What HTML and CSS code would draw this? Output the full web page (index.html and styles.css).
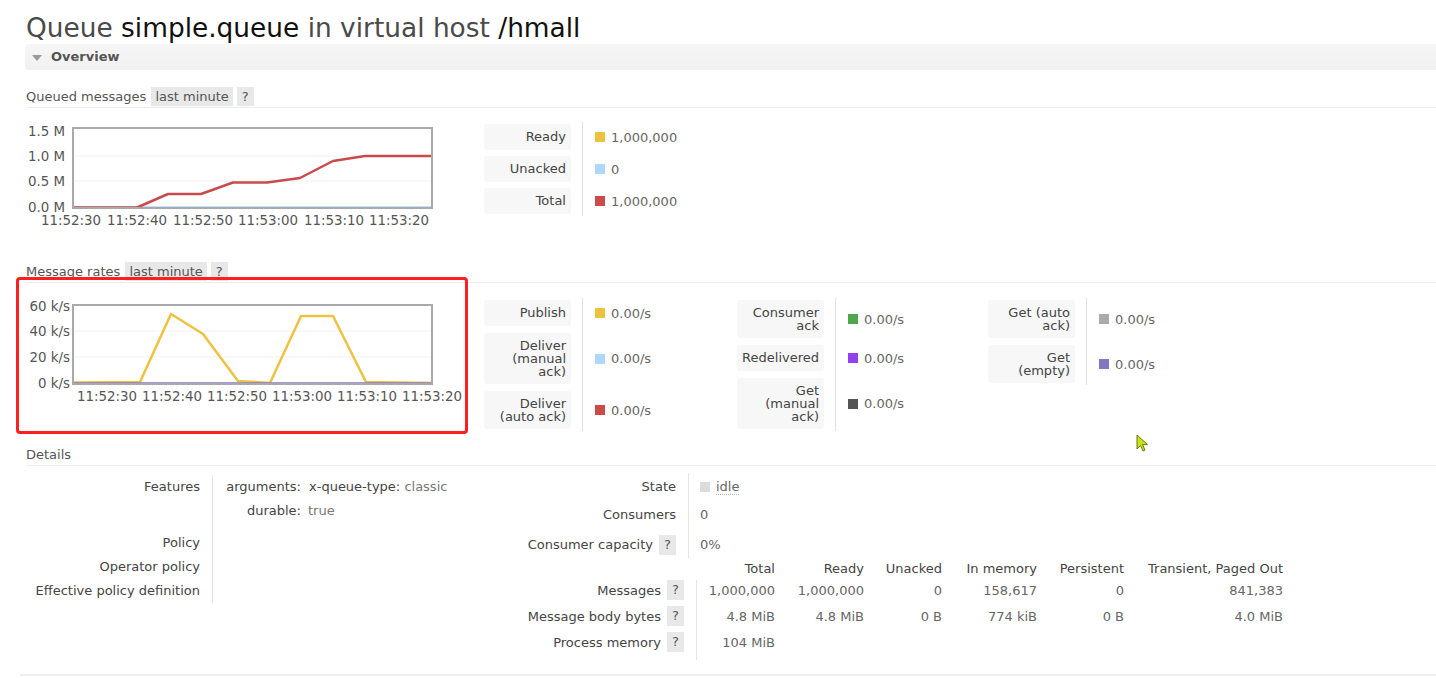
FILE: index.html
```html
<!DOCTYPE html>
<html>
<head>
<meta charset="utf-8">
<title>Queue simple.queue</title>
<link rel="stylesheet" href="styles.css">
</head>
<body>
<div class="page">
  <h1 class="title">Queue <b>simple.queue</b> in virtual host <b>/hmall</b></h1>

  <section class="panel">
    <div class="panel-head"><span class="tri"></span>Overview</div>

    <div class="subhead">Queued messages <span class="tag">last minute</span><span class="help">?</span></div>
    <div class="chart-row">
      <svg class="chart" width="444" height="115" viewBox="26 118 444 115">
        <line class="grid" x1="74" y1="156" x2="431" y2="156"/>
        <line class="grid" x1="74" y1="181" x2="431" y2="181"/>
        <line x1="74" y1="207.5" x2="431" y2="207.5" stroke="#afd8f8" stroke-width="2.5"/>
        <polyline fill="none" stroke="#c84a4c" stroke-width="2.5" stroke-linejoin="round"
          points="74,207.5 137,207.5 168,194 201,194 233,182.5 267,182.5 300,178 333,161 365,156 431,156"/>
        <rect x="73" y="128" width="359" height="80" fill="none" stroke="#a9a9ad" stroke-width="2"/>
        <g class="ylab">
          <text x="65" y="136">1.5 M</text>
          <text x="65" y="161">1.0 M</text>
          <text x="65" y="186">0.5 M</text>
          <text x="65" y="212">0.0 M</text>
        </g>
        <g class="xlab">
          <text x="71" y="225">11:52:30</text>
          <text x="137" y="225">11:52:40</text>
          <text x="203" y="225">11:52:50</text>
          <text x="268" y="225">11:53:00</text>
          <text x="334" y="225">11:53:10</text>
          <text x="399" y="225">11:53:20</text>
        </g>
      </svg>
      <div class="legend q-legend rows3">
        <div class="sep"></div>
        <div class="lab">Ready</div><div class="val"><i class="sw" style="background:#edc240"></i>1,000,000</div>
        <div class="lab">Unacked</div><div class="val"><i class="sw" style="background:#afd8f8"></i>0</div>
        <div class="lab">Total</div><div class="val"><i class="sw" style="background:#cb4b4b"></i>1,000,000</div>
      </div>
    </div>

    <div class="subhead sub-rates">Message rates <span class="tag">last minute</span><span class="help">?</span></div>
    <div class="chart-row rates-row">
      <svg class="chart" width="444" height="120" viewBox="26 290 444 120">
        <line class="grid" x1="74" y1="331" x2="431" y2="331"/>
        <line class="grid" x1="74" y1="357" x2="431" y2="357"/>
        <polyline fill="none" stroke="#edc240" stroke-width="2.5" stroke-linejoin="round"
          points="74,382.5 140,382 171,314 203,334 238,381 255,382 270,383 301,316 333,316 366,382 431,383"/>
        <line x1="74" y1="383.5" x2="431" y2="383.5" stroke="#8679c4" stroke-width="2.5"/>
        <rect x="73" y="305" width="359" height="79" fill="none" stroke="#a9a9ad" stroke-width="2"/>
        <g class="ylab">
          <text x="70" y="311">60 k/s</text>
          <text x="70" y="336">40 k/s</text>
          <text x="70" y="362">20 k/s</text>
          <text x="70" y="388">0 k/s</text>
        </g>
        <g class="xlab">
          <text x="107" y="401">11:52:30</text>
          <text x="172" y="401">11:52:40</text>
          <text x="237" y="401">11:52:50</text>
          <text x="302" y="401">11:53:00</text>
          <text x="367" y="401">11:53:10</text>
          <text x="432" y="401">11:53:20</text>
        </g>
      </svg>
      <div class="rates">
        <div class="legend r-legend rows3">
          <div class="sep"></div>
          <div class="lab">Publish</div><div class="val"><i class="sw" style="background:#edc240"></i>0.00/s</div>
          <div class="lab">Deliver<br>(manual<br>ack)</div><div class="val"><i class="sw" style="background:#afd8f8"></i>0.00/s</div>
          <div class="lab">Deliver<br>(auto ack)</div><div class="val"><i class="sw" style="background:#cb4b4b"></i>0.00/s</div>
        </div>
        <div class="legend r-legend rows3">
          <div class="sep"></div>
          <div class="lab">Consumer<br>ack</div><div class="val"><i class="sw" style="background:#4da74d"></i>0.00/s</div>
          <div class="lab">Redelivered</div><div class="val"><i class="sw" style="background:#9440ed"></i>0.00/s</div>
          <div class="lab">Get<br>(manual<br>ack)</div><div class="val"><i class="sw" style="background:#555555"></i>0.00/s</div>
        </div>
        <div class="legend r-legend rows2">
          <div class="sep"></div>
          <div class="lab">Get (auto<br>ack)</div><div class="val"><i class="sw" style="background:#aaaaaa"></i>0.00/s</div>
          <div class="lab">Get<br>(empty)</div><div class="val"><i class="sw" style="background:#7c79c0"></i>0.00/s</div>
        </div>
      </div>
    </div>

    <div class="subhead sub-details">Details</div>
    <div class="details">
      <div class="dleft">
        <div class="dlab feat">Features</div>
        <div class="dval feat">
          <div class="args">
            <span class="k">arguments:</span><span class="v"><span class="kk">x-queue-type:</span> <span class="g">classic</span></span>
            <span class="k">durable:</span><span class="v"><span class="g">true</span></span>
          </div>
        </div>
        <div class="dlab">Policy</div><div class="dval"></div>
        <div class="dlab">Operator policy</div><div class="dval"></div>
        <div class="dlab">Effective policy definition</div><div class="dval"></div>
      </div>
      <div class="dright">
        <div class="stable">
          <div class="slab">State</div><div class="sval"><i class="idle-sw"></i><span class="idle">idle</span></div>
          <div class="slab">Consumers</div><div class="sval">0</div>
          <div class="slab">Consumer capacity <span class="help">?</span></div><div class="sval">0%</div>
        </div>
        <div class="mtable">
          <div class="mh"></div>
          <div class="mh">Total</div><div class="mh">Ready</div><div class="mh">Unacked</div><div class="mh">In memory</div><div class="mh">Persistent</div><div class="mh">Transient, Paged Out</div>

          <div class="mlab">Messages <span class="help">?</span></div>
          <div class="mc first">1,000,000</div><div class="mc">1,000,000</div><div class="mc">0</div><div class="mc">158,617</div><div class="mc">0</div><div class="mc">841,383</div>

          <div class="mlab">Message body bytes <span class="help">?</span></div>
          <div class="mc first">4.8 MiB</div><div class="mc">4.8 MiB</div><div class="mc">0 B</div><div class="mc">774 kiB</div><div class="mc">0 B</div><div class="mc">4.0 MiB</div>

          <div class="mlab">Process memory <span class="help">?</span></div>
          <div class="mc first last">104 MiB</div><div class="mc"></div><div class="mc"></div><div class="mc"></div><div class="mc"></div><div class="mc"></div>
        </div>
      </div>
    </div>
  </section>

  <div class="redbox"></div>
  <svg class="cursor" width="14" height="20" viewBox="0 0 14 20">
    <path d="M1 1 L1 15 L4.5 11.5 L7 17 L9 16 L6.6 10.6 L11.5 10.6 Z" fill="#c8e21a" stroke="#6b7a10" stroke-width="1"/>
  </svg>
</div>
</body>
</html>
```

FILE: styles.css
```css
* { box-sizing: border-box; }
html, body { margin: 0; padding: 0; background: #fff; }
body {
  font-family: "DejaVu Sans", Verdana, sans-serif;
  font-size: 13px;
  color: #444;
  width: 1436px;
  height: 678px;
  overflow: hidden;
}
.page { position: relative; padding: 12px 0 0 26px; }

.title {
  margin: 0;
  font-size: 26.4px;
  line-height: 32px;
  font-weight: normal;
  color: #4a4a4a;
  white-space: nowrap;
}
.title b { font-weight: normal; color: #111; }

.panel { border-bottom: 2px solid #efefef; height: 632px; margin-left: -6px; padding-left: 6px; }

.panel-head {
  height: 26px;
  line-height: 26px;
  background: linear-gradient(#f6f6f6, #f1f1f1);
  border-radius: 3px 0 0 3px;
  font-weight: bold;
  color: #555;
  padding-left: 26px;
  position: relative;
  margin-left: -1px;
}
.tri {
  position: absolute;
  left: 7px; top: 11px;
  width: 0; height: 0;
  border-left: 5px solid transparent;
  border-right: 5px solid transparent;
  border-top: 6px solid #9a9a9a;
}

.subhead {
  margin-top: 17px;
  height: 21px;
  line-height: 20px;
  border-bottom: 1px solid #ededed;
  color: #555;
  white-space: nowrap;
}
.sub-rates { margin-top: 29px; }
.sub-details { margin-top: 16px; }

.tag, .help {
  display: inline-block;
  background: #e8e8e8;
  color: #555;
  height: 19px;
  line-height: 19px;
  padding: 0 4px;
  vertical-align: top;
}
.tag { margin-left: 1px; }
.help { margin-left: 4px; padding: 0 5px; }

.chart-row { display: flex; align-items: flex-start; margin-top: 10px; }
.rates-row { margin-top: 7px; }
.chart { display: block; flex: none; }
.chart text { font-family: "DejaVu Sans", Verdana, sans-serif; font-size: 13.4px; fill: #555; }
.chart .ylab text { text-anchor: end; }
.chart .xlab text { text-anchor: middle; }
.chart .grid { stroke: #f1f1f1; stroke-width: 1; }

.legend {
  display: grid;
  grid-template-columns: 87px 1px auto;
  column-gap: 11px;
  row-gap: 6px;
  align-items: center;
  margin-left: 14px;
}
.rows3 { grid-template-rows: auto auto auto; }
.rows2 { grid-template-rows: auto auto; }
.q-legend { margin-top: 6px; }
.legend .sep { grid-column: 2; grid-row: 1 / -1; align-self: stretch; background: #e2e2e2; margin: -2px 0; }
.legend .lab {
  grid-column: 1;
  background: #f7f7f7;
  border-radius: 3px;
  text-align: right;
  padding: 6px 5px 6px 4px;
  line-height: 13px;
  min-height: 26px;
  color: #444;
  white-space: nowrap;
}
.legend .val { grid-column: 3; display: flex; align-items: center; color: #666; padding-left: 1px; white-space: nowrap; }
.sw { display: inline-block; width: 10px; height: 10px; margin-right: 6px; }

.rates { display: flex; align-items: flex-start; margin-left: 14px; padding-top: 10px; }
.r-legend { margin-left: 0; width: 253px; flex: none; row-gap: 7px; }
.r-legend:nth-child(2) { width: 251px; }

.details { display: flex; align-items: flex-start; padding-top: 9px; }
.dleft {
  width: 454px;
  flex: none;
  display: grid;
  grid-template-columns: 174px auto;
  grid-template-rows: 56px 24px 24px 24px;
  line-height: 24px;
}
.dlab { text-align: right; color: #444; white-space: nowrap; }
.dval { border-left: 1px solid #e4e4e4; margin-left: 12px; padding-left: 13px; }
.args { display: grid; grid-template-columns: 75px auto; column-gap: 7px; line-height: 24px; }
.args .k { text-align: right; white-space: nowrap; }
.args .v { white-space: nowrap; }
.kk { margin-left: 1px; }
.g { color: #777; }

.dright { width: 900px; flex: none; }
.stable {
  display: grid;
  grid-template-columns: 208px auto;
  grid-template-rows: 28px 30px 27px;
  line-height: 28px;
  margin-top: -2px;
}
.slab { text-align: right; padding-right: 12px; white-space: nowrap; }
.slab .help { height: 20px; line-height: 20px; margin-top: 4px; vertical-align: top; margin-left: 2px; }
.sval { border-left: 1px solid #e4e4e4; padding-left: 11px; color: #666; }
.idle-sw { display: inline-block; width: 10px; height: 10px; background: #dcdcdc; margin-right: 6px; vertical-align: -1px; }
.idle { border-bottom: 1px dotted #bbb; line-height: 14px; display: inline-block; }

.mtable {
  display: grid;
  grid-template-columns: 216px 79px 89px 78px 95px 87px 159px;
  grid-template-rows: 22px 26px 26px 28px;
  align-items: start;
  margin-top: 0;
}
.mh { text-align: right; line-height: 22px; color: #444; white-space: nowrap; }
.mlab { text-align: right; padding-right: 12px; line-height: 22px; white-space: nowrap; }
.mlab .help { height: 20px; line-height: 20px; margin-left: 2px; }
.mc { text-align: right; line-height: 22px; color: #666; white-space: nowrap; height: 100%; }
.mc.first { border-left: 1px solid #e4e4e4; }

.redbox {
  position: absolute;
  left: 16px; top: 277px;
  width: 452px; height: 157px;
  border: 3px solid #ff1f1f;
  border-radius: 4px;
}
.cursor { position: absolute; left: 1136px; top: 434px; }
```
